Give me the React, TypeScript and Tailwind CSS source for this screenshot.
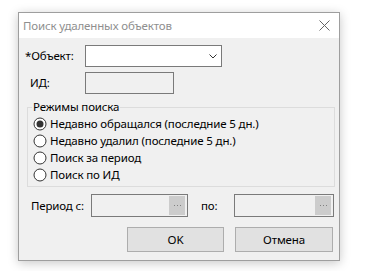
function Radio({ checked, label }: { checked?: boolean; label: string }) {
  return (
    <div className="flex h-[17px] items-center gap-[3px]">
      <svg width="14" height="14" viewBox="0 0 14 14" className="shrink-0">
        <circle cx="7" cy="7" r="6" fill="#fff" stroke="#333" strokeWidth="1" />
        {checked && <circle cx="7" cy="7" r="3.5" fill="#333" />}
      </svg>
      <span>{label}</span>
    </div>
  );
}

function DateField({ width }: { width: string }) {
  return (
    <div className={`flex h-[23px] items-center justify-end border border-[#7a7a7a] bg-[#f0f0f0] pr-[2px] ${width}`}>
      <div className="flex h-[19px] w-[16px] items-center justify-center gap-[2px] bg-[#cccccc]">
        <div className="h-px w-px bg-[#808080]" />
        <div className="h-px w-px bg-[#808080]" />
        <div className="h-px w-px bg-[#808080]" />
      </div>
    </div>
  );
}

export default function App() {
  return (
    <div className="min-h-screen bg-white pl-[18px] pt-[12px] font-['Noto_Sans',sans-serif] text-[11.5px] tracking-[-0.15px] text-black">
      <div className="flex h-[249px] w-[322px] flex-col border border-[#9e9e9e] bg-[#f0f0f0] shadow-[0_2px_10px_rgba(0,0,0,0.22)]">
        <div className="flex h-[25px] items-center justify-between bg-white pl-[4px] pr-[9px]">
          <span className="text-[#8f8f8f]">Поиск удаленных объектов</span>
          <svg width="11" height="11" viewBox="0 0 11 11">
            <path d="M0.5 0.5 L10.5 10.5 M10.5 0.5 L0.5 10.5" stroke="#666" strokeWidth="1" />
          </svg>
        </div>

        <div className="flex flex-1 flex-col">
          <div className="ml-[6px] mt-[7px] flex h-[22px] items-center">
            <span className="w-[60px]">*Объект:</span>
            <div className="flex h-[22px] w-[137px] items-center justify-end border border-[#7a7a7a] bg-white pr-[4px]">
              <svg width="8" height="5" viewBox="0 0 8 5">
                <path d="M0.5 0.5 L4 4 L7.5 0.5" fill="none" stroke="#333" strokeWidth="1" />
              </svg>
            </div>
          </div>

          <div className="ml-[6px] mt-[5px] flex h-[22px] items-center">
            <span className="w-[60px] pl-[5px]">ИД:</span>
            <div className="h-[22px] w-[89px] border border-[#7a7a7a] bg-[#f0f0f0]" />
          </div>

          <fieldset className="ml-[8px] mt-[5px] h-[88px] w-[308px] border border-[#dcdcdc] pl-[5px]">
            <legend className="ml-[-1px] px-[1px] leading-[16px]">Режимы поиска</legend>
            <Radio checked label="Недавно обращался (последние 5 дн.)" />
            <Radio label="Недавно удалил (последние 5 дн.)" />
            <Radio label="Поиск за период" />
            <Radio label="Поиск по ИД" />
          </fieldset>

          <div className="ml-[12px] mt-[7px] flex h-[23px] items-center">
            <span className="w-[60px]">Период с:</span>
            <DateField width="w-[97px]" />
            <span className="ml-[13px] w-[33px]">по:</span>
            <DateField width="w-[100px]" />
          </div>

          <div className="mt-[10px] flex justify-end gap-[11px] pr-[6px]">
            <button className="h-[25px] w-[97px] border border-[#adadad] bg-[#e1e1e1]">OK</button>
            <button className="h-[25px] w-[98px] border border-[#adadad] bg-[#e1e1e1]">Отмена</button>
          </div>
        </div>
      </div>
    </div>
  );
}
